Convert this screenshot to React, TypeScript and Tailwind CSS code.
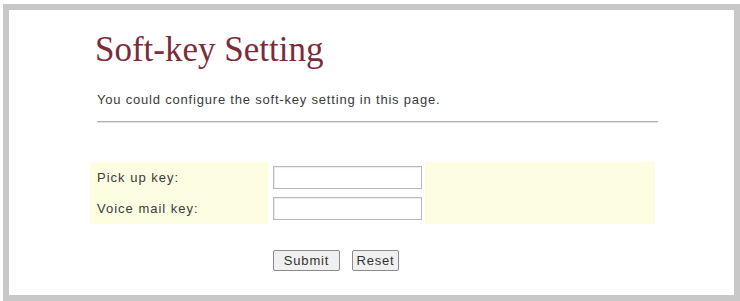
export default function App() {
  return (
    <div className="w-[740px] h-[301px] bg-white pl-[3px] pt-[4px] overflow-hidden">
      <div className="w-[737px] h-[297px] border-[6px] border-[#c8c8c8] bg-white pl-[81px] font-['Liberation_Sans',Arial,sans-serif]">
        {/* Title */}
        <h1 className="mt-[22px] ml-[5px] text-[35px] leading-none text-[#7b2c3c] font-['Liberation_Serif','Times_New_Roman',serif]">
          Soft-key Setting
        </h1>

        <p className="mt-[26px] ml-[7px] text-[13px] leading-none tracking-[0.8px] text-[#3a3a3a]">
          You could configure the soft-key setting in this page.
        </p>

        <div className="mt-[15px] ml-[7px] w-[561px] h-[2px] border-t border-[#b4b4b4] bg-[#e2e2e2]" />

        {/* Form */}
        <div className="mt-[39px] w-[565px] bg-[#fdfde2]">
          {['Pick up key:', 'Voice mail key:'].map((label) => (
            <div key={label} className="flex h-[31px] items-stretch">
              <div className="w-[178px] pl-[7px] flex items-center text-[13px] tracking-[1px] text-[#3a3a3a]">
                {label}
              </div>
              <div className="w-[157px] bg-white pl-[5px] flex items-center">
                <input
                  type="text"
                  className="w-[149px] h-[23px] border border-[#b8b8b8] bg-white shadow-[inset_1px_1px_1px_rgba(0,0,0,0.08)] outline-none"
                />
              </div>
              <div className="flex-1" />
            </div>
          ))}
        </div>

        {/* Buttons */}
        <div className="mt-[26px] ml-[183px] flex gap-[12px]">
          <button className="w-[67px] h-[21px] border border-[#8a8a8a] rounded-[2px] bg-[#f0f0f0] text-[13px] tracking-[0.8px] text-[#333] leading-none">
            Submit
          </button>
          <button className="w-[47px] h-[21px] border border-[#8a8a8a] rounded-[2px] bg-[#f0f0f0] text-[13px] tracking-[0.8px] text-[#333] leading-none">
            Reset
          </button>
        </div>
      </div>
    </div>
  )
}
